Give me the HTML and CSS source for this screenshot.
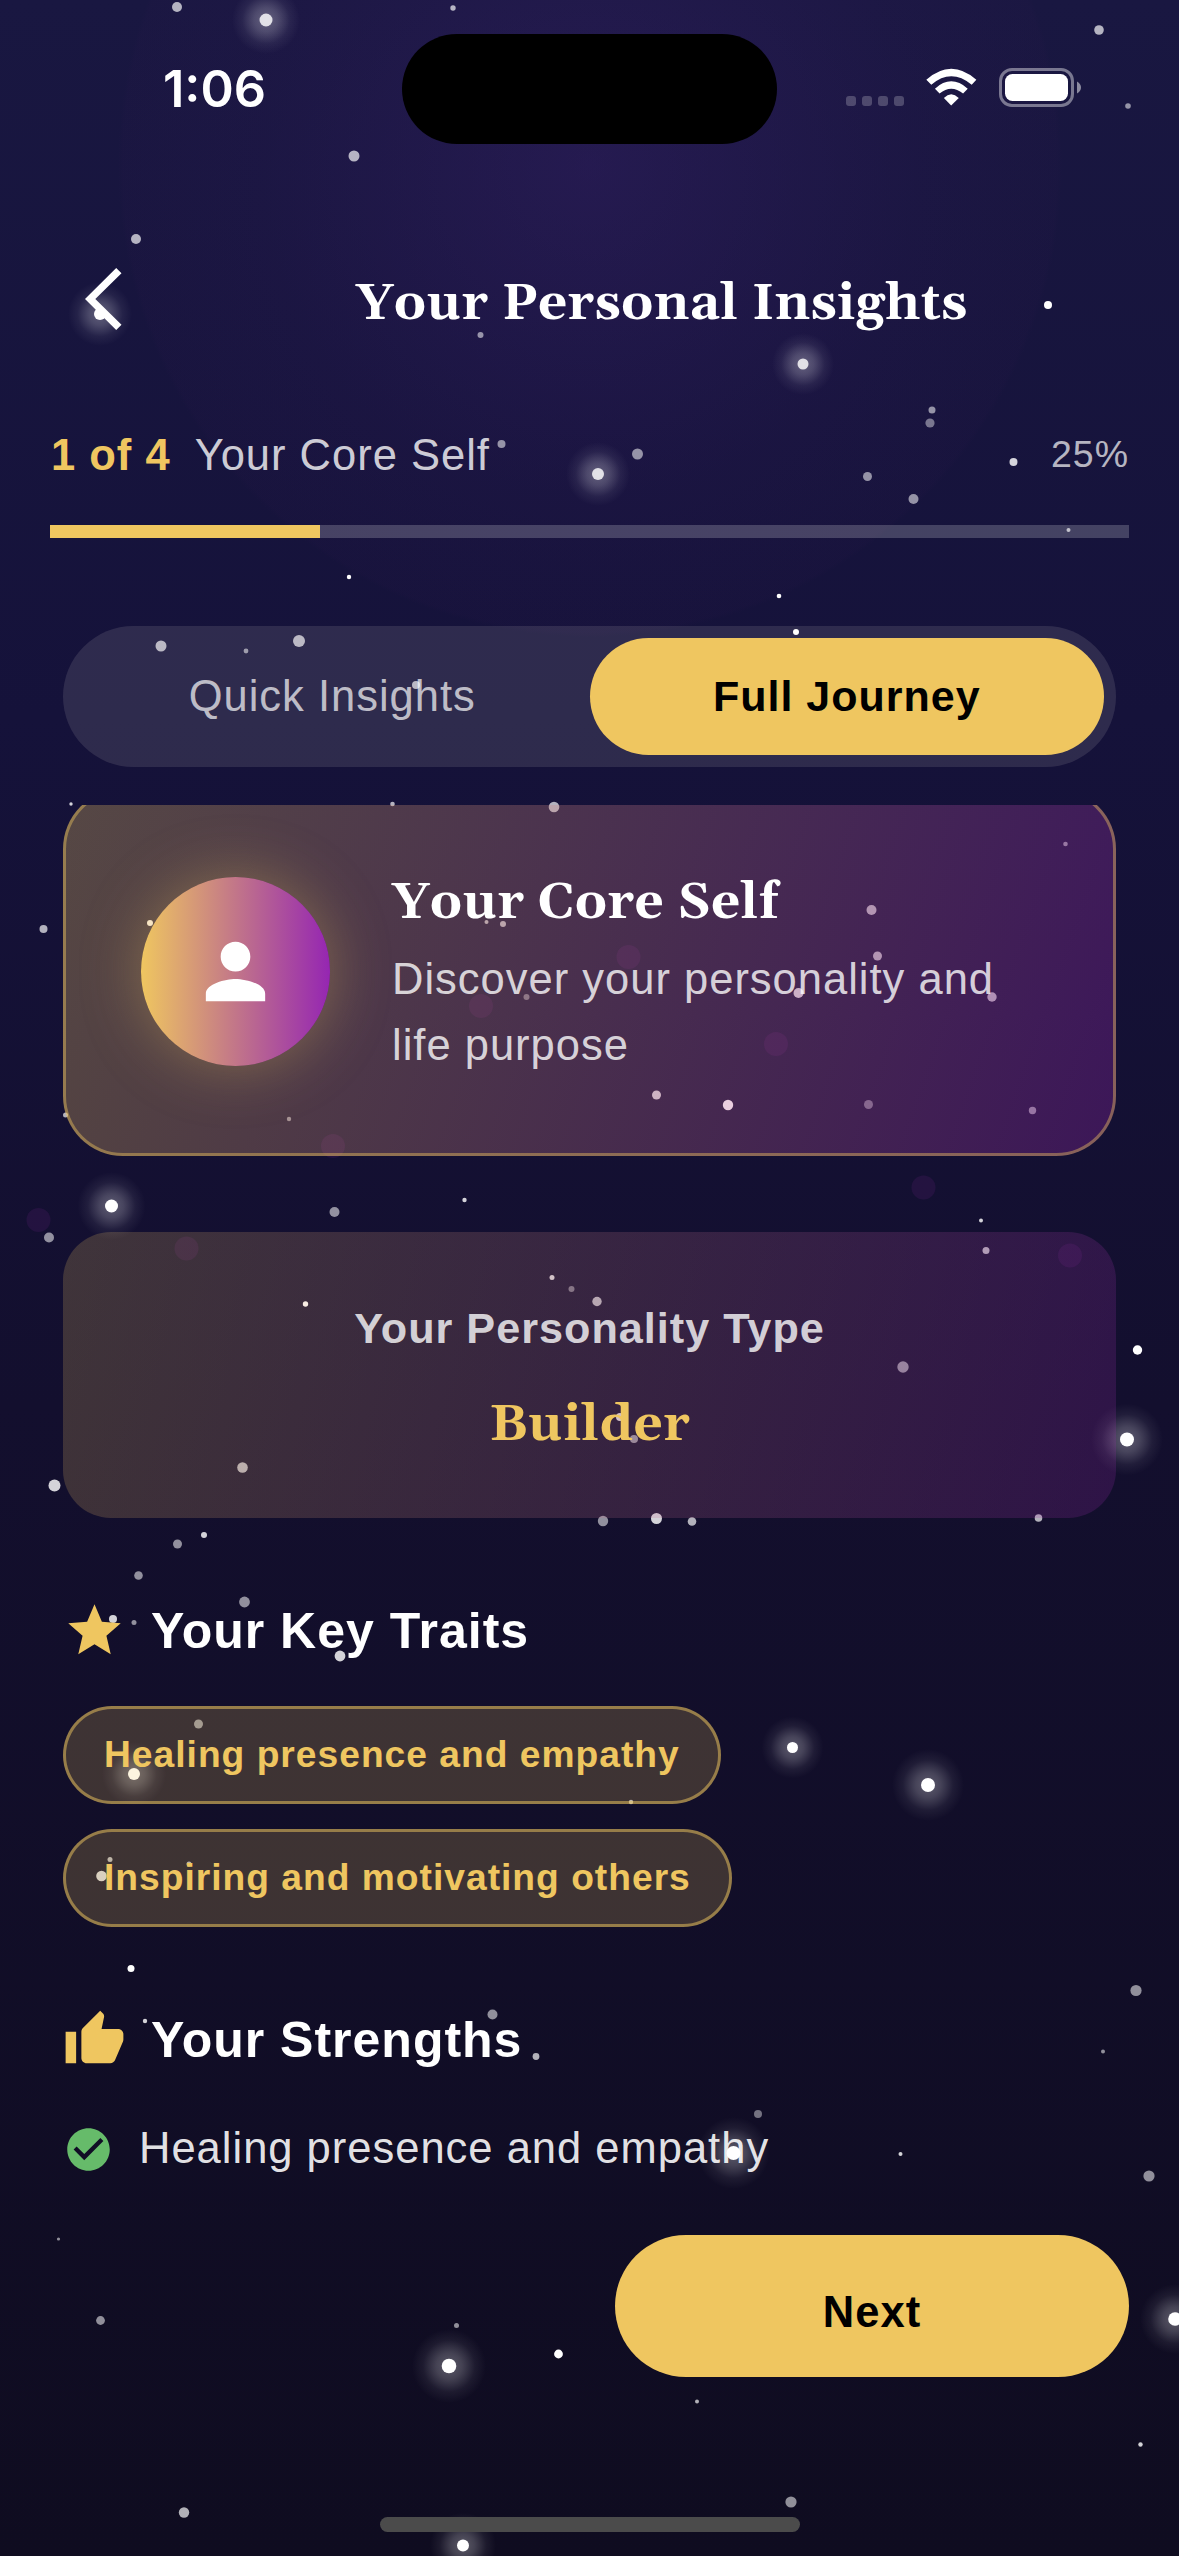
FILE: index.html
```html
<!DOCTYPE html>
<html lang="en">
<head>
<meta charset="utf-8">
<title>Your Personal Insights</title>
<link rel="stylesheet" href="styles.css">
</head>
<body>
<div class="screen">
  <svg class="sky" viewBox="0 0 1179 2556" aria-hidden="true">
    <defs>
      <radialGradient id="halo"><stop offset="0" stop-color="#fff" stop-opacity=".32"/><stop offset=".35" stop-color="#fff" stop-opacity=".22"/><stop offset=".7" stop-color="#fff" stop-opacity=".06"/><stop offset="1" stop-color="#fff" stop-opacity="0"/></radialGradient>
    </defs>
    <g fill="#9c27b0" fill-opacity=".12">
      <circle cx="628.5" cy="957" r="12"/><circle cx="481" cy="1006" r="12"/><circle cx="776" cy="1044" r="12"/><circle cx="333" cy="1146" r="12"/><circle cx="923.5" cy="1187.5" r="12"/><circle cx="38.5" cy="1220" r="12"/><circle cx="186.5" cy="1248.5" r="12"/><circle cx="1070" cy="1255.5" r="12"/>
    </g>
    <g fill="url(#halo)">
      <circle cx="266" cy="20" r="34"/><circle cx="100" cy="314" r="32"/><circle cx="803" cy="364" r="31"/><circle cx="598" cy="474" r="32"/><circle cx="111.5" cy="1206" r="34"/><circle cx="1127" cy="1439.5" r="36"/><circle cx="134" cy="1774" r="32"/><circle cx="792.5" cy="1747.5" r="31"/><circle cx="928" cy="1785" r="36"/><circle cx="733.5" cy="2153" r="36"/><circle cx="449" cy="2366" r="37"/><circle cx="1175" cy="2319" r="35"/><circle cx="463" cy="2545.5" r="33"/>
    </g>
    <g fill="#fff">
      <circle cx="100" cy="314" r="6"/><circle cx="111.5" cy="1206" r="6.5"/><circle cx="1127" cy="1439.5" r="7"/><circle cx="134" cy="1774" r="6"/><circle cx="792.5" cy="1747.5" r="5.5"/><circle cx="928" cy="1785" r="7"/><circle cx="733.5" cy="2153" r="7"/><circle cx="449" cy="2366" r="7.3"/><circle cx="1175" cy="2319" r="6.8"/><circle cx="463" cy="2545.5" r="6"/>
      <circle cx="1048" cy="305" r="4"/><circle cx="349" cy="577" r="2.2"/><circle cx="779" cy="596" r="2.3"/><circle cx="796" cy="632" r="3"/><circle cx="150" cy="923" r="3"/><circle cx="728" cy="1105" r="5.2"/><circle cx="305.5" cy="1304" r="2.7"/><circle cx="1137.5" cy="1350" r="4.7"/><circle cx="131" cy="1968.5" r="3.5"/><circle cx="558.5" cy="2354" r="4.4"/>
    </g>
    <g fill="#fff" fill-opacity=".82">
      <circle cx="266" cy="20" r="6.5"/><circle cx="598" cy="474" r="6"/><circle cx="803" cy="364" r="5.5"/><circle cx="71" cy="804" r="1.7"/><circle cx="798.5" cy="993" r="5"/><circle cx="656.5" cy="1095" r="4.5"/><circle cx="464.5" cy="1200" r="2.2"/><circle cx="981" cy="1220.5" r="2"/><circle cx="552" cy="1277.5" r="2.5"/><circle cx="620" cy="1417" r="4"/><circle cx="54.5" cy="1485.5" r="6"/><circle cx="656.5" cy="1518.5" r="5.5"/><circle cx="113" cy="1619" r="4"/><circle cx="340" cy="1656" r="5.4"/><circle cx="101.5" cy="1876" r="5.3"/><circle cx="145" cy="2021" r="2.2"/><circle cx="900.5" cy="2154" r="2"/><circle cx="1140.5" cy="2444.5" r="2.2"/><circle cx="1013.5" cy="462" r="4"/><circle cx="204" cy="1535" r="3"/>
    </g>
    <g fill="#fff" fill-opacity=".68">
      <circle cx="177" cy="7" r="5"/><circle cx="453" cy="8" r="2.7"/><circle cx="1099" cy="30" r="4.8"/><circle cx="354" cy="156" r="5.5"/><circle cx="136" cy="239" r="5"/><circle cx="1068.5" cy="530" r="2"/><circle cx="299" cy="641" r="6"/><circle cx="161" cy="646" r="5.5"/><circle cx="416" cy="685" r="4"/><circle cx="392.5" cy="804" r="2.3"/><circle cx="554" cy="807" r="5.3"/><circle cx="871.5" cy="910" r="5"/><circle cx="43.5" cy="929" r="4"/><circle cx="486.5" cy="922" r="2"/><circle cx="503" cy="924" r="3"/><circle cx="877.5" cy="956" r="4.5"/><circle cx="992" cy="997" r="4.7"/><circle cx="65.5" cy="1115" r="2.5"/><circle cx="986" cy="1250.5" r="3.5"/><circle cx="597" cy="1301.5" r="4.7"/><circle cx="242.5" cy="1467.5" r="5.3"/><circle cx="692" cy="1521.5" r="4.3"/><circle cx="1038.5" cy="1518" r="3.8"/><circle cx="536" cy="2056.5" r="3.4"/><circle cx="697" cy="2401.5" r="2"/><circle cx="184" cy="2512.5" r="5.2"/><circle cx="110" cy="1859.5" r="2.5"/><circle cx="189" cy="1864" r="2.5"/><circle cx="631" cy="1802" r="2.2"/>
    </g>
    <g fill="#fff" fill-opacity=".54">
      <circle cx="1128" cy="106" r="2.8"/><circle cx="480.5" cy="335" r="3"/><circle cx="932" cy="410" r="3.5"/><circle cx="501.5" cy="444" r="4"/><circle cx="637.5" cy="454" r="5.5"/><circle cx="867.5" cy="476.5" r="4.5"/><circle cx="913.5" cy="499" r="5"/><circle cx="246" cy="651" r="2.4"/><circle cx="1065.5" cy="844" r="2.3"/><circle cx="1032.5" cy="1110.5" r="3.7"/><circle cx="289" cy="1119" r="2.2"/><circle cx="334.5" cy="1212" r="5"/><circle cx="49" cy="1237.5" r="5"/><circle cx="903" cy="1367" r="5.7"/><circle cx="634" cy="1439" r="4"/><circle cx="603" cy="1521" r="5.2"/><circle cx="177.5" cy="1544" r="4.5"/><circle cx="138.5" cy="1575.5" r="4.3"/><circle cx="244.5" cy="1602" r="5.4"/><circle cx="134" cy="1622.5" r="2.5"/><circle cx="198.5" cy="1724" r="4.5"/><circle cx="1136" cy="1990.5" r="5.6"/><circle cx="492.5" cy="2014.5" r="5"/><circle cx="1103" cy="2051.5" r="2"/><circle cx="1149" cy="2176" r="5.6"/><circle cx="58.5" cy="2239" r="1.6"/><circle cx="100.5" cy="2320.5" r="4.4"/><circle cx="456.5" cy="2325.5" r="2.5"/><circle cx="791" cy="2502" r="5.6"/>
    </g>
    <g fill="#fff" fill-opacity=".42">
      <circle cx="930" cy="423" r="4.6"/><circle cx="526.5" cy="997" r="3"/><circle cx="868.5" cy="1104.5" r="4.5"/><circle cx="571.5" cy="1289" r="3"/><circle cx="758" cy="2114" r="4"/>
    </g>
  </svg>

  <div class="status">
    <span class="time">1:06</span>
    <div class="island"></div>
    <div class="indicators">
      <div class="dots"><i></i><i></i><i></i><i></i></div>
      <svg class="wifi" viewBox="288 55 154 114"><g fill="#fff"><path d="M289 90Q364 24 440 90L426 105Q364 54 304 105Z"/><path d="M315 117Q364 73 414 117L400 132Q364 102 329 132Z"/><path d="M342 145Q364 123 387 145L364 168Z"/></g></svg>
      <svg class="battery" viewBox="0 0 82 39"><rect x="1.5" y="1.5" width="72" height="36" rx="11.5" fill="none" stroke="#fff" stroke-opacity=".42" stroke-width="3"/><rect x="6" y="6" width="63" height="27" rx="7.5" fill="#fff"/><path d="M78 13.5Q82 16 82 19.5T78 25.500Z" fill="#fff" fill-opacity=".5"/></svg>
    </div>
  </div>

  <header class="header">
    <svg class="back" viewBox="0 0 37 62"><path d="M31.200 0L36.500 5.200L10.300 31L36.500 56.800L31.200 62L0 31Z" fill="#fff"/></svg>
    <h1 class="serif title">Your Personal Insights</h1>
  </header>

  <div class="progress">
    <div class="progress-labels">
      <span class="step">1 of 4</span>
      <span class="step-name">Your Core Self</span>
      <span class="percent">25%</span>
    </div>
    <div class="track"><div class="fill" style="width:25%"></div></div>
  </div>

  <div class="toggle">
    <span class="option">Quick Insights</span>
    <span class="option selected">Full Journey</span>
  </div>

  <main class="content">
    <section class="hero">
      <div class="avatar"><svg viewBox="0 0 24 24"><path d="M12 12c2.210 0 4-1.790 4-4s-1.790-4-4-4-4 1.790-4 4 1.790 4 4 4zm0 2c-2.670 0-8 1.340-8 4v2h16v-2c0-2.660-5.330-4-8-4z" fill="#fff"/></svg></div>
      <div class="hero-text">
        <h2 class="serif hero-title">Your Core Self</h2>
        <p class="hero-desc">Discover your personality and life purpose</p>
      </div>
    </section>

    <section class="type">
      <p class="type-label">Your Personality Type</p>
      <p class="serif type-name">Builder</p>
    </section>

    <h3 class="heading"><svg viewBox="0 0 24 24"><path d="M12 17.270L18.180 21l-1.640-7.030L22 9.240l-7.190-.61L12 2 9.190 8.630 2 9.240l5.460 4.730L5.820 21z" fill="#efc660"/></svg>Your Key Traits</h3>
    <div class="chips">
      <span class="chip">Healing presence and empathy</span>
      <span class="chip">Inspiring and motivating others</span>
    </div>

    <h3 class="heading"><svg viewBox="0 0 24 24"><path d="M1 21h4V9H1v12zm22-11c0-1.100-.9-2-2-2h-6.310l.95-4.570.03-.32c0-.41-.17-.79-.44-1.060L14.170 1 7.590 7.590C7.220 7.950 7 8.450 7 9v10c0 1.100.9 2 2 2h9c.83 0 1.540-.5 1.840-1.220l3.020-7.050c.09-.23.14-.47.14-.73v-2z" fill="#efc660"/></svg>Your Strengths</h3>
    <div class="item"><svg viewBox="0 0 24 24"><path d="M12 2C6.480 2 2 6.480 2 12s4.480 10 10 10 10-4.480 10-10S17.520 2 12 2zm-2 15l-5-5 1.410-1.410L10 14.170l7.590-7.590L19 8l-9 9z" fill="#66bb6a"/></svg><span>Healing presence and empathy</span></div>
  </main>

  <footer class="footer"><button class="next">Next</button></footer>
  <div class="home"></div>
</div>
</body>
</html>
```
FILE: styles.css
```css
* { box-sizing: border-box; margin: 0; padding: 0; }

body {
  width: 1179px;
  height: 2556px;
  overflow: hidden;
  font-family: "Liberation Sans", Arial, sans-serif;
  font-size: 43.5px;
  letter-spacing: 1px;
  color: #fff;
}

.screen {
  position: relative;
  display: flex;
  flex-direction: column;
  width: 1179px;
  height: 2556px;
  overflow: hidden;
  background:
    radial-gradient(circle 472px at 590px 165px, rgba(66, 36, 118, .31), rgba(56, 28, 96, .12) 70%, rgba(56, 26, 84, .07) 99%, transparent 100%),
    linear-gradient(180deg, #191741 0%, #15123a 28%, #130f2e 55%, #0f0c20 100%);
  isolation: isolate;
}

.sky {
  position: absolute;
  inset: 0;
  width: 1179px;
  height: 2556px;
  z-index: -1;
}

.serif {
  font-family: Georgia, Gelasio, "Liberation Serif", serif;
  font-weight: 700;
  font-size: 51px;
  letter-spacing: .42px;
}

.status {
  display: grid;
  grid-template-columns: 402px 375px 402px;
  height: 177px;
  padding-top: 34px;
  align-items: start;
}
.time {
  padding-left: 163px;
  font: 600 50.500px/110px Inter, sans-serif;
  letter-spacing: 0;
}
.island { height: 110px; border-radius: 55px; background: #000; }
.indicators { display: flex; padding: 34px 0 0 69px; }
.dots { display: flex; gap: 6px; padding-top: 28px; margin-right: 22px; }
.dots i { width: 10px; height: 10px; border-radius: 3px; background: rgba(255, 255, 255, .22); }
.wifi { width: 51px; height: 38px; margin-right: 22px; }
.battery { width: 82px; height: 39px; }

.header {
  display: flex;
  align-items: center;
  height: 250px;
  padding-left: 85px;
}
.back { width: 37px; height: 62px; margin-top: -6px; }
.title { margin: 3px 0 0 234px; line-height: 70px; white-space: nowrap; }

.progress { padding: 0 50px; }
.progress-labels { display: flex; height: 57px; line-height: 56px; white-space: nowrap; }
.step { margin: 0 24px 0 1px; font-weight: 700; color: #efc660; }
.step-name { color: rgba(255, 255, 255, .8); }
.percent { margin-left: auto; font-size: 37.5px; line-height: 54px; color: rgba(255, 255, 255, .7); }
.track { height: 13px; margin-top: 41px; background: rgba(255, 255, 255, .2); }
.fill { height: 100%; background: #efc660; }

.toggle {
  display: grid;
  grid-template-columns: 1fr 1fr;
  height: 141px;
  margin: 88px 63px 0;
  padding: 12px;
  border-radius: 71px;
  background: rgba(255, 246, 235, .11);
}
.option {
  display: flex;
  align-items: center;
  justify-content: center;
  border-radius: 59px;
  color: rgba(255, 255, 255, .7);
}
.selected { background: #efc660; color: #000; font-size: 43px; font-weight: 700; }

.content { height: 1418px; margin-top: 38px; padding: 0 63px; overflow: hidden; }

.hero {
  display: flex;
  align-items: center;
  gap: 62px;
  height: 367px;
  margin-top: -16px;
  padding: 0 75px 3px;
  border: 3px solid rgba(240, 200, 96, .42);
  border-radius: 60px;
  background: linear-gradient(109deg, rgba(240, 200, 96, .3), rgba(156, 39, 176, .3)) border-box;
}
.avatar {
  display: grid;
  place-items: center;
  flex: none;
  width: 189px;
  height: 189px;
  border-radius: 50%;
  background: linear-gradient(90deg, #efc660, #9526b2);
  box-shadow: 0 0 60px rgba(240, 200, 96, .34);
}
.avatar svg { width: 89px; height: 89px; }
.hero-text { padding-top: 5px; }
.hero-title { line-height: 68px; margin-bottom: 9px; }
.hero-desc { line-height: 66px; color: rgba(255, 255, 255, .8); }

.type {
  height: 286px;
  margin-top: 76px;
  padding-top: 66px;
  border-radius: 48px;
  text-align: center;
  background: linear-gradient(105deg, rgba(240, 200, 96, .2), rgba(156, 39, 176, .2));
}
.type-label { font-size: 43.200px; font-weight: 700; line-height: 60px; color: rgba(255, 255, 255, .8); }
.type-name { margin-top: 32px; line-height: 70px; color: #efc660; }

.heading {
  display: flex;
  align-items: center;
  gap: 25px;
  height: 63px;
  margin-top: 81px;
  font-size: 50px;
  line-height: 60px;
}
.heading svg { width: 63px; height: 63px; }

.chips { display: flex; flex-direction: column; align-items: flex-start; gap: 25px; margin-top: 44px; }
.chip {
  height: 98px;
  padding: 0 38px;
  border: 3px solid rgba(240, 200, 96, .5);
  border-radius: 49px;
  background: rgba(240, 200, 96, .2);
  color: #efc660;
  font-size: 37.200px;
  font-weight: 700;
  line-height: 91px;
  white-space: nowrap;
}

.item {
  display: flex;
  align-items: center;
  gap: 25px;
  height: 51px;
  margin-top: 53px;
  color: rgba(255, 255, 255, .9);
}
.item svg { width: 51px; height: 51px; }
.item span { margin-top: -3px; }

.footer { display: flex; justify-content: flex-end; padding: 12px 50px 0; }
.next {
  width: 514px;
  height: 142px;
  padding-top: 13px;
  border: 0;
  border-radius: 71px;
  background: #efc660;
  color: #000;
  font: 700 43.500px "Liberation Sans", Arial, sans-serif;
  letter-spacing: 1px;
}

.home { width: 420px; height: 15px; margin: 140px auto 0; border-radius: 8px; background: #4b4b4b; }
```
